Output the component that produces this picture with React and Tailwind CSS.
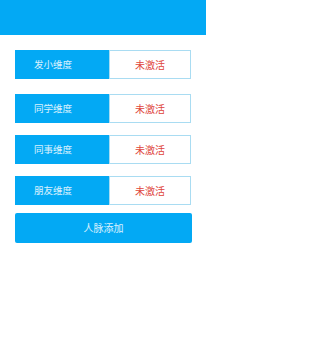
const rows = ["发小维度", "同学维度", "同事维度", "朋友维度"];

export default function App() {
  return (
    <div
      className="w-[206px] h-[359px] bg-white"
      style={{ fontFamily: '"Noto Sans CJK SC", "Noto Sans", sans-serif' }}
    >
      <div className="h-[35px] bg-[#03a9f4]" />

      <div className="px-[15px] pt-[15px] flex flex-col">
        <div className="flex flex-col gap-[12px]">
          {rows.map((label, i) => (
            <div key={label} className={`flex h-[29px] ${i === 1 ? "mt-[3px]" : ""}`}>
              <div className="w-[94px] bg-[#03a9f4] flex items-center pl-[19px] text-[9.5px] text-white/85 leading-none">
                {label}
              </div>
              <div className="flex-1 border border-[#a9dcf2] bg-white flex items-center justify-center text-[10px] text-[#e0453b] leading-none">
                未激活
              </div>
            </div>
          ))}
        </div>

        <button className="mt-[8px] h-[30px] w-[177px] rounded-[2px] bg-[#03a9f4] text-[10px] text-white/85 flex items-center justify-center leading-none">
          人脉添加
        </button>
      </div>
    </div>
  );
}
